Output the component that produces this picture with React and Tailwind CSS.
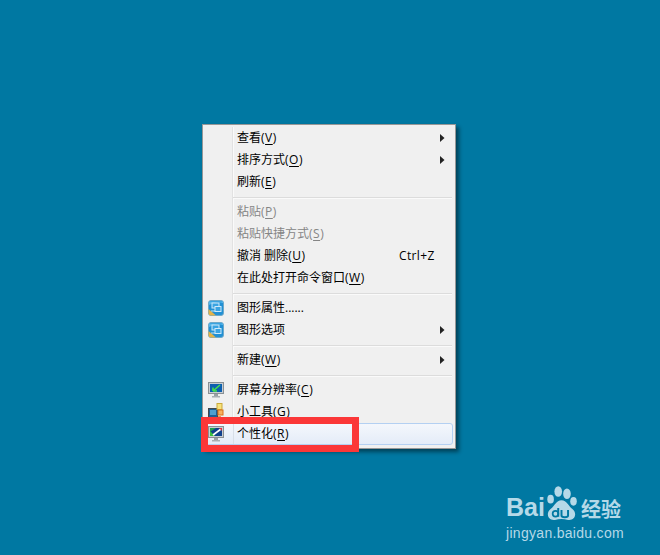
const cjk = { fontFamily: '"Open Sans","Noto Sans CJK SC",sans-serif' };

function Arrow() {
  return (
    <svg width="5" height="8" viewBox="0 0 5 8" className="absolute left-[235px] top-[7px]">
      <path d="M0 0 L4.5 4 L0 8 Z" fill="#222" />
    </svg>
  );
}

function GfxIcon() {
  return (
    <svg width="16" height="16" viewBox="0 0 16 16">
      <rect x="0.5" y="0.5" width="15" height="15" rx="2.5" fill="#2190d4" stroke="#6fa9c9" />
      <path d="M1 5 Q8 1 15 3 L15 1.5 L1 1.5 Z" fill="#57b8ec" />
      <path d="M0.5 9 L0.5 13 Q0.5 15.5 3 15.5 L8 15.5 Z" fill="#e3b34a" />
      <rect x="4" y="3" width="7" height="5" fill="#3aa4e2" stroke="#cfeafa" />
      <rect x="7" y="6.5" width="6" height="5" fill="#3aa4e2" stroke="#cfeafa" />
      <path d="M3 11 L7 11" stroke="#bfe6f8" />
    </svg>
  );
}

function Monitor({ children }) {
  return (
    <svg width="16" height="16" viewBox="0 0 16 16">
      <rect x="0.5" y="0.5" width="15" height="11" fill="#c9ced2" stroke="#8a9094" />
      <rect x="2" y="2" width="12" height="8" fill="#10408c" />
      {children}
      <rect x="6" y="12" width="4" height="2" fill="#9aa0a4" />
      <rect x="4" y="14" width="8" height="1.5" fill="#a8aeb2" />
    </svg>
  );
}

function GadgetIcon() {
  return (
    <svg width="16" height="18" viewBox="0 0 16 18">
      <rect x="0.5" y="5.5" width="9" height="11" fill="#1f5f96" stroke="#43484c" />
      <rect x="2" y="7" width="6" height="5" fill="#4f9fd0" />
      <rect x="9" y="0.5" width="5" height="6" fill="#f7e27a" stroke="#c9a93c" />
      <rect x="10" y="7" width="5" height="5" fill="#f7b060" stroke="#d9701c" />
      <rect x="10" y="13" width="3" height="3" fill="#f0a050" />
    </svg>
  );
}

function Item({ label, mnemonic, disabled, shortcut, arrow, icon, hover }) {
  return (
    <div className={`relative flex h-[22px] items-center pl-[32px] text-[12px] leading-[22px] ${disabled ? "text-[#858585]" : "text-black"}`}>
      {hover && (
        <div className="absolute inset-x-0 top-0 h-[22px] rounded-[3px] border border-[#b4d0f2] bg-gradient-to-b from-[#f4f7fc] to-[#e4ecf8] pl-[27px]">
          <div className="h-full w-px bg-[#d8dfe8]" />
        </div>
      )}
      {icon && <div className="absolute left-[3px] top-[3px] flex h-4 w-4 items-center">{icon}</div>}
      <span className="relative whitespace-pre">
        {label}
        {mnemonic && (
          <span className="tracking-[0.5px]">
            (<span className="underline underline-offset-2">{mnemonic}</span>)
          </span>
        )}
      </span>
      {shortcut && <span className="absolute left-[194px] tracking-[0.35px]">{shortcut}</span>}
      {arrow && <Arrow />}
    </div>
  );
}

function Sep() {
  return (
    <div className="flex h-2 items-center pl-[28px] pr-[1px] pt-px">
      <div className="h-[2px] w-full border-b border-[#fafafa] bg-[#dcdcdc]" />
    </div>
  );
}

export default function App() {
  return (
    <div className="relative h-[555px] w-[660px] overflow-hidden bg-[#0078a2] pl-[202px] pt-[124px]" style={cjk}>
      <div className="relative h-[325px] w-[254px] border border-[#979797] bg-[#f0f0f0] px-[2px] pb-px pt-[2px] shadow-[3px_3px_4px_rgba(0,0,0,0.45)]">
        <div className="absolute bottom-[2px] left-[29px] top-[2px] w-[2px] border-r border-[#fafafa] bg-[#e2e2e2]" />
        <div className="relative">
          <Item label="查看" mnemonic="V" arrow />
          <Item label="排序方式" mnemonic="O" arrow />
          <Item label="刷新" mnemonic="E" />
          <Sep />
          <Item label="粘贴" mnemonic="P" disabled />
          <Item label="粘贴快捷方式" mnemonic="S" disabled />
          <Item label="撤消 删除" mnemonic="U" shortcut="Ctrl+Z" />
          <Item label="在此处打开命令窗口" mnemonic="W" />
          <Sep />
          <Item label="图形属性......" icon={<GfxIcon />} />
          <Item label="图形选项" arrow icon={<GfxIcon />} />
          <Sep />
          <Item label="新建" mnemonic="W" arrow />
          <Sep />
          <Item
            label="屏幕分辨率"
            mnemonic="C"
            icon={
              <Monitor>
                <path d="M2 2 H14 V10 H2 Z" fill="#0d5fb0" />
                <path d="M5 9 L12 3 M5 9 V5.5 M5 9 H9" stroke="#45e04a" strokeWidth="1.6" fill="none" />
              </Monitor>
            }
          />
          <Item label="小工具" mnemonic="G" icon={<GadgetIcon />} />
          <Item
            label="个性化"
            mnemonic="R"
            hover
            icon={
              <Monitor>
                <path d="M2 5 L7 10 H2 Z" fill="#38c040" />
                <path d="M2 2 H8 L2 6 Z" fill="#20a050" />
                <path d="M5 9 L13 3" stroke="#ffffff" strokeWidth="1.6" />
                <path d="M11 2 H14 V5 Z" fill="#e03040" />
              </Monitor>
            }
          />
        </div>
      </div>

      <div className="absolute left-[201px] top-[417px] h-[35px] w-[158px] border-[7px] border-[#fb3738]" />

      <div className="absolute left-[506px] top-[484px] w-[120px] text-[#b5d9e8]">
        <div className="flex h-[37px] items-end">
          <span className="text-[25px] font-bold leading-[28px]" style={{ fontFamily: '"Liberation Sans",sans-serif' }}>Bai</span>
          <svg width="35" height="36" viewBox="0 0 32 33" className="-ml-[1px]">
            <g fill="#b5d9e8">
              <ellipse cx="6" cy="13" rx="3" ry="4" />
              <ellipse cx="13" cy="6" rx="3.5" ry="4.8" />
              <ellipse cx="21" cy="8" rx="3.5" ry="4.8" />
              <ellipse cx="27" cy="15" rx="3" ry="4" />
              <path d="M16 14 C11 14 10 19 6 22 C1 26 4 33 10 32 C14 31 18 31 22 32 C28 33 31 26 26 22 C22 19 21 14 16 14 Z" />
            </g>
            <path d="M13 21 V29 M16 23 V28 Q16 29.5 19 29.5 Q22 29.5 22 28 V23" stroke="#0078a2" strokeWidth="1.8" fill="none" />
            <circle cx="10.5" cy="26.3" r="2.6" fill="none" stroke="#0078a2" strokeWidth="1.6" />
          </svg>
          <span className="ml-[2px] text-[20px] font-bold leading-[24px]" style={{ fontFamily: '"Noto Sans CJK SC",sans-serif' }}>经验</span>
        </div>
        <div className="mt-[2px] whitespace-nowrap text-[14px] leading-[20px] tracking-[0.3px]" style={{ fontFamily: '"Liberation Sans",sans-serif' }}>jingyan.baidu.com</div>
      </div>
    </div>
  );
}
